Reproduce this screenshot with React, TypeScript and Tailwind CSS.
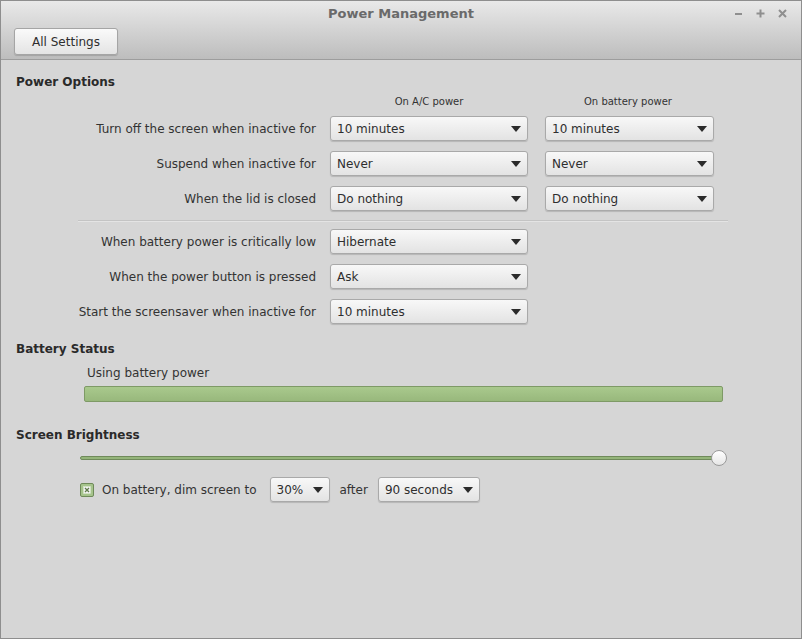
import React from 'react';

const font = { fontFamily: '"DejaVu Sans", "Liberation Sans", sans-serif' };

function Arrow() {
  return (
    <svg width="10" height="6" viewBox="0 0 10 6" className="shrink-0">
      <path d="M0 0 L10 0 L5 6 Z" fill="#2b2b2b" />
    </svg>
  );
}

function Combo({ value, w }: { value: string; w: string }) {
  return (
    <div
      className={`${w} h-[25px] flex items-center justify-between pl-[6px] pr-[6px] rounded-[3px] border border-[#a9a9a9] bg-gradient-to-b from-[#f8f8f8] to-[#e3e3e3] shadow-[0_1px_1px_rgba(0,0,0,0.15)] text-[12px] text-[#2e2e2e]`}
    >
      <span>{value}</span>
      <Arrow />
    </div>
  );
}

function Row({ label, ac, bat }: { label: string; ac: string; bat?: string }) {
  return (
    <>
      <div className="h-[25px] flex items-center justify-end text-[12px] text-[#333]">{label}</div>
      <Combo value={ac} w="w-[198px]" />
      {bat ? <Combo value={bat} w="w-[169px]" /> : <div />}
    </>
  );
}

export default function App() {
  return (
    <div style={font} className="w-[802px] h-[639px] flex flex-col border border-[#8e8e8e] bg-[#d6d6d6] overflow-hidden">
      {/* barra de título + toolbar */}
      <div className="h-[59px] shrink-0 flex flex-col bg-gradient-to-b from-[#e9e9e9] to-[#bdbdbd] border-b border-[#9d9d9d]">
        <div className="h-[26px] relative flex items-center justify-center">
          <span className="text-[13px] font-bold text-[#6a6a6a]">Power Management</span>
          <div className="absolute right-[14px] top-[8px] flex items-center gap-[13px]">
            <svg width="9" height="9" viewBox="0 0 9 9">
              <path d="M1 5 H8" stroke="#8f8f8f" strokeWidth="2" />
            </svg>
            <svg width="9" height="9" viewBox="0 0 9 9">
              <path d="M0.5 4.5 H8.5 M4.5 0.5 V8.5" stroke="#8f8f8f" strokeWidth="2" />
            </svg>
            <svg width="9" height="9" viewBox="0 0 9 9">
              <path d="M1 1 L8 8 M8 1 L1 8" stroke="#8f8f8f" strokeWidth="2" />
            </svg>
          </div>
        </div>
        <div className="pl-[13px] pt-[1px]">
          <button className="w-[104px] h-[27px] rounded-[3px] border border-[#a5a5a5] bg-gradient-to-b from-[#fafafa] to-[#e4e4e4] shadow-[0_1px_1px_rgba(0,0,0,0.15)] text-[12px] text-[#2e2e2e]">
            All Settings
          </button>
        </div>
      </div>

      <div className="pl-[15px] flex flex-col">
        <div className="mt-[14px] text-[12px] font-bold text-[#2a2a2a] leading-[16px]">Power Options</div>
        <div className="grid grid-cols-[300px_198px_169px] gap-x-[14px] mt-[5px]">
          <div />
          <div className="text-center text-[10px] text-[#333] leading-[14px]">On A/C power</div>
          <div className="text-center text-[10px] text-[#333] leading-[14px] ml-[3px]">On battery power</div>
        </div>
        <div className="grid grid-cols-[300px_198px_169px] gap-x-[14px] gap-y-[10px] mt-[7px] [&>*:nth-child(3n)]:ml-[3px]">
          <Row label="Turn off the screen when inactive for" ac="10 minutes" bat="10 minutes" />
          <Row label="Suspend when inactive for" ac="Never" bat="Never" />
          <Row label="When the lid is closed" ac="Do nothing" bat="Do nothing" />
        </div>
        <div className="ml-[62px] w-[650px] h-px bg-[#c4c4c4] border-b border-[#e4e4e4] mt-[9px] box-content" />
        <div className="grid grid-cols-[300px_198px_169px] gap-x-[14px] gap-y-[10px] mt-[7px]">
          <Row label="When battery power is critically low" ac="Hibernate" />
          <Row label="When the power button is pressed" ac="Ask" />
          <Row label="Start the screensaver when inactive for" ac="10 minutes" />
        </div>

        <div className="mt-[17px] text-[12px] font-bold text-[#2a2a2a] leading-[16px]">Battery Status</div>
        <div className="ml-[71px] mt-[8px] text-[12px] text-[#333] leading-[16px]">Using battery power</div>
        <div className="ml-[68px] mt-[5px] w-[639px] h-[16px] rounded-[2px] border border-[#7e9a66] bg-gradient-to-b from-[#a9c98d] to-[#98b87c]" />

        <div className="mt-[25px] text-[12px] font-bold text-[#2a2a2a] leading-[16px]">Screen Brightness</div>
        <div className="ml-[64px] mt-[7px] w-[640px] h-[16px] relative flex items-center">
          <div className="w-full h-[4px] rounded-full bg-[#94b47a] border border-[#6f8a5a]" />
          <div className="absolute right-[-7px] top-0 w-[16px] h-[16px] rounded-full border border-[#9a9a9a] bg-gradient-to-b from-[#ffffff] to-[#e6e6e6]" />
        </div>
        <div className="ml-[64px] mt-[11px] flex items-center text-[12px] text-[#333]">
          <div className="w-[14px] h-[14px] rounded-[2px] border border-[#6f8a5a] bg-[#a6c48c] flex items-center justify-center">
            <svg width="8" height="8" viewBox="0 0 8 8">
              <rect x="0.5" y="0.5" width="7" height="7" fill="#f4f4f4" stroke="#d8e6cc" strokeWidth="0.5" />
              <path d="M2 2 L6 6 M6 2 L2 6" stroke="#5f7a4a" strokeWidth="1.3" />
            </svg>
          </div>
          <span className="ml-[8px]">On battery, dim screen to</span>
          <div className="ml-[13px]">
            <Combo value="30%" w="w-[60px]" />
          </div>
          <span className="ml-[10px]">after</span>
          <div className="ml-[10px]">
            <Combo value="90 seconds" w="w-[102px]" />
          </div>
        </div>
      </div>
    </div>
  );
}
